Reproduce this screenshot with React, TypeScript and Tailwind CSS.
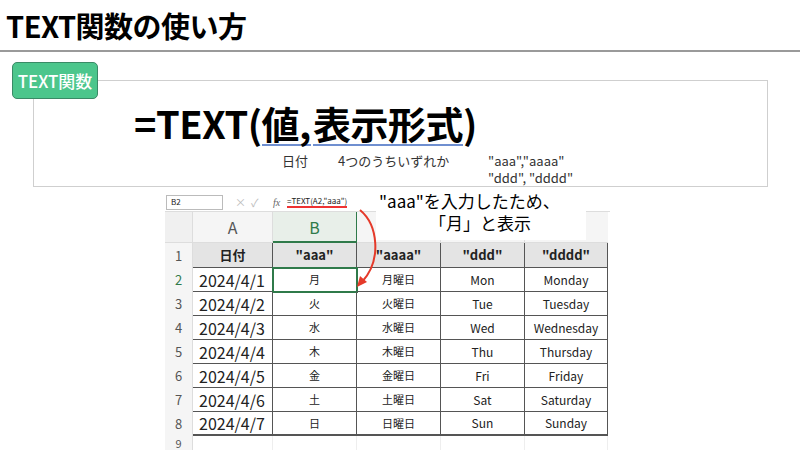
const F = { fontFamily: '"Noto Sans CJK JP", "Noto Sans", sans-serif' };
const rows = [
  ['2024/4/1', '月', '月曜日', 'Mon', 'Monday'],
  ['2024/4/2', '火', '火曜日', 'Tue', 'Tuesday'],
  ['2024/4/3', '水', '水曜日', 'Wed', 'Wednesday'],
  ['2024/4/4', '木', '木曜日', 'Thu', 'Thursday'],
  ['2024/4/5', '金', '金曜日', 'Fri', 'Friday'],
  ['2024/4/6', '土', '土曜日', 'Sat', 'Saturday'],
  ['2024/4/7', '日', '日曜日', 'Sun', 'Sunday'],
];
export default function App() {
  return (
    <div className="w-[800px] h-[450px] bg-white overflow-hidden relative" style={F}>
      <div className="h-[52px] border-b-2 border-[#9a9a9a] pl-[6px] flex items-center">
        <span className="text-[29px] font-bold tracking-[-0.5px] text-black leading-none">TEXT関数の使い方</span>
      </div>
      <div className="relative h-[140px]">
        <div className="absolute left-[33px] top-[28px] w-[735px] h-[107px] border border-[#cfcfcf]"></div>
        <div className="absolute left-[12px] top-[10px] w-[86px] h-[37px] rounded-[5px] bg-[#4cc68c] border border-[#3a8a66] text-white text-[17px] font-medium flex items-center justify-center">TEXT関数</div>
        <div className="absolute left-[134px] top-[52px] text-[38px] font-bold leading-none text-black flex tracking-[-0.5px]">
          <span>=TEXT(</span>
          <span className="border-b-2 border-[#6f8fd0] pb-[2px]">値,</span>
          <span className="ml-[2px] border-b-2 border-[#6f8fd0] pb-[2px]">表示形式</span>
          <span>)</span>
        </div>
        <div className="absolute left-[282px] top-[100px] text-[13px] text-[#333] leading-[17px]">日付</div>
        <div className="absolute left-[338px] top-[100px] text-[13px] text-[#333] leading-[17px]">4つのうちいずれか</div>
        <div className="absolute left-[488px] top-[100px] text-[13px] text-[#333] leading-[17px]">"aaa","aaaa"<br />"ddd", "dddd"</div>
      </div>
      <div className="absolute left-[165px] top-[193px] w-[445px] h-[257px] bg-white text-[#222]">
        <div className="h-[19px] flex items-center border-b border-[#ddd] text-[8px]">
          <div className="w-[57px] h-[15px] ml-[1px] border border-[#bbb] flex items-center pl-[4px]">B2</div>
          <div className="w-[50px] text-[#bbb] text-[11px] pl-[12px]">×&nbsp;&nbsp;✓</div>
          <div className="italic text-[#666] text-[10px] w-[14px]" style={{ fontFamily: 'serif' }}>fx</div>
          <div className="border-b-2 border-[#e33] leading-[10px]">=TEXT(A2,"aaa")</div>
        </div>
        <div className="grid grid-cols-[28px_80px_84px_84px_84px_83px]">
          <div className="h-[31px] bg-[#f0f0f0] border-r border-b border-[#ddd]"></div>
          <div className="h-[31px] bg-[#f5f5f5] border-r border-b border-[#ddd] flex items-center justify-center text-[16px] text-[#555]">A</div>
          <div className="h-[31px] bg-[#e8efe9] border-r border-b-2 border-[#2f7a4a] flex items-center justify-center text-[16px] text-[#2f7a4a]">B</div>
          <div className="h-[31px] bg-[#f5f5f5] border-r border-b border-[#ddd]"></div>
          <div className="h-[31px] bg-[#f5f5f5] border-r border-b border-[#ddd]"></div>
          <div className="h-[31px] bg-[#f5f5f5] border-b border-[#ddd]"></div>
          <div className="h-[25px] bg-[#f5f5f5] flex items-center justify-center text-[13px] text-[#555] border-r border-[#ddd]">1</div>
          {['日付', '"aaa"', '"aaaa"', '"ddd"', '"dddd"'].map((h, i) => (
            <div key={i} className={`h-[25px] bg-[#e4e4e4] border-r border-b border-[#555] flex items-center justify-center text-[13px] font-bold ${i === 1 ? 'border-[#2f7a4a]' : ''}`}>{h}</div>
          ))}
          {rows.map((r, ri) => (
            <>
              <div key={'n' + ri} className={`h-[24px] bg-[#f5f5f5] flex items-center justify-center text-[13px] border-r border-[#ddd] ${ri === 0 ? 'text-[#2f7a4a]' : 'text-[#555]'}`}>{ri + 2}</div>
              {r.map((c, ci) => (
                <div key={ri + '-' + ci} className={`h-[24px] flex items-center justify-center border-r border-b border-[#555] ${ci === 0 ? 'text-[16px] justify-start pl-[6px]' : ci === 1 || ci === 2 ? 'text-[11px]' : 'text-[12px]'} ${ri === 0 && ci === 1 ? 'outline-2 outline-[#2f7a4a] -outline-offset-1' : ''} ${ri === 6 ? 'border-b-2' : ''}`}>{c}</div>
              ))}
            </>
          ))}
          <div className="h-[14px] bg-[#f5f5f5] text-[11px] leading-[14px] text-[#555] flex justify-center border-r border-[#ddd] overflow-hidden">9</div>
          {[0, 1, 2, 3, 4].map(i => <div key={i} className="h-[14px] border-r border-[#eee]"></div>)}
        </div>
      </div>
      <div className="absolute left-[376px] top-[190px] w-[210px] h-[50px] bg-white text-[17px] leading-[22px] text-black">
        <div className="pl-[3px]">"aaa"を入力したため、</div>
        <div className="pl-[53px]">「月」と表示</div>
      </div>
      <svg className="absolute left-0 top-0" width="800" height="450">
        <path d="M360 210 C378 225 382 260 362 282" fill="none" stroke="#e53a2a" strokeWidth="2" />
        <path d="M357 287 L360 276 L367 282 Z" fill="#e53a2a" />
      </svg>
    </div>
  );
}
